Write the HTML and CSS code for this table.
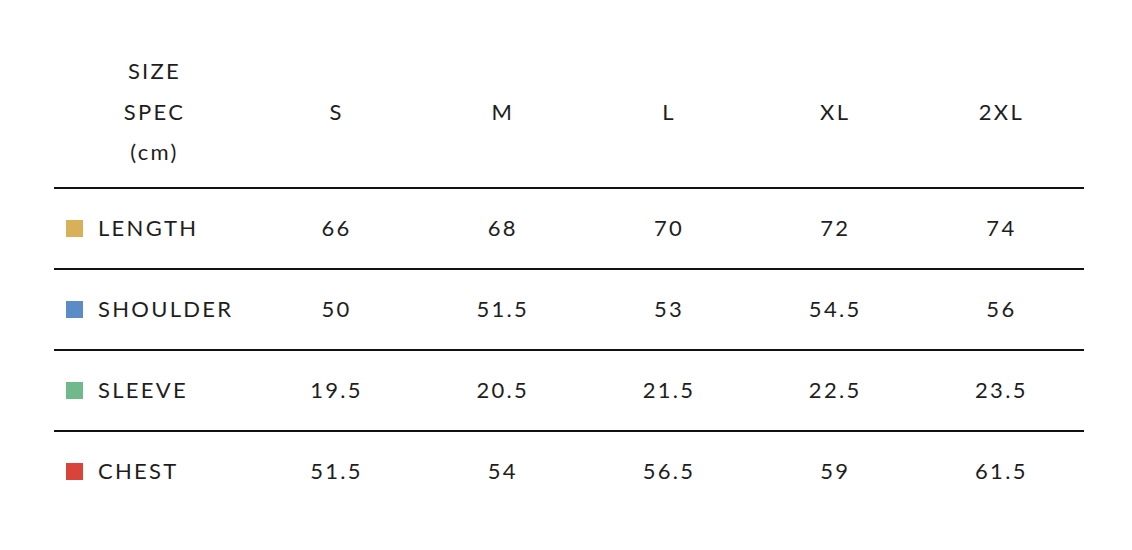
FILE: index.html
```html
<!DOCTYPE html>
<html>
<head>
<meta charset="utf-8">
<link rel="stylesheet" href="styles.css">
</head>
<body>
<div class="spec">
  <div class="row head">
    <div class="label-head">SIZE<br>SPEC<br>(cm)</div>
    <div class="cell">S</div>
    <div class="cell">M</div>
    <div class="cell">L</div>
    <div class="cell">XL</div>
    <div class="cell">2XL</div>
  </div>
  <div class="row">
    <div class="label"><span class="sw gold"></span>LENGTH</div>
    <div class="cell">66</div><div class="cell">68</div><div class="cell">70</div><div class="cell">72</div><div class="cell">74</div>
  </div>
  <div class="row">
    <div class="label"><span class="sw blue"></span>SHOULDER</div>
    <div class="cell">50</div><div class="cell">51.5</div><div class="cell">53</div><div class="cell">54.5</div><div class="cell">56</div>
  </div>
  <div class="row">
    <div class="label"><span class="sw green"></span>SLEEVE</div>
    <div class="cell">19.5</div><div class="cell">20.5</div><div class="cell">21.5</div><div class="cell">22.5</div><div class="cell">23.5</div>
  </div>
  <div class="row">
    <div class="label"><span class="sw red"></span>CHEST</div>
    <div class="cell">51.5</div><div class="cell">54</div><div class="cell">56.5</div><div class="cell">59</div><div class="cell">61.5</div>
  </div>
</div>
</body>
</html>
```

FILE: styles.css
```css
html, body {
  margin: 0;
  padding: 0;
  background: #ffffff;
}
body {
  font-family: Lato, "Noto Sans", sans-serif;
  font-size: 22px;
  color: #1e1e1e;
  letter-spacing: 2.3px;
}
.spec {
  width: 1030px;
  margin-left: 54px;
  padding-top: 51px;
}
.row {
  display: grid;
  grid-template-columns: 199px repeat(5, 1fr);
  align-items: center;
  height: 79px;
  border-top: 2px solid #111111;
}
.row.head {
  border-top: none;
  height: 136px;
  align-items: start;
}
.label-head {
  text-align: center;
  line-height: 40.5px;
  padding-left: 2px;
}
.head .cell {
  line-height: 40.5px;
  padding-top: 40.5px;
}
.cell {
  text-align: center;
  padding-left: 1px;
}
.row:not(.head) > div {
  padding-bottom: 3px;
}
.label {
  display: flex;
  align-items: center;
  padding-left: 12px;
}
.sw {
  width: 17px;
  height: 17px;
  margin-right: 15px;
  margin-top: 2px;
  flex: none;
}
.gold { background: #d9b05a; }
.blue { background: #5b8cc8; }
.green { background: #6fb98a; }
.red { background: #d9443a; }
```
